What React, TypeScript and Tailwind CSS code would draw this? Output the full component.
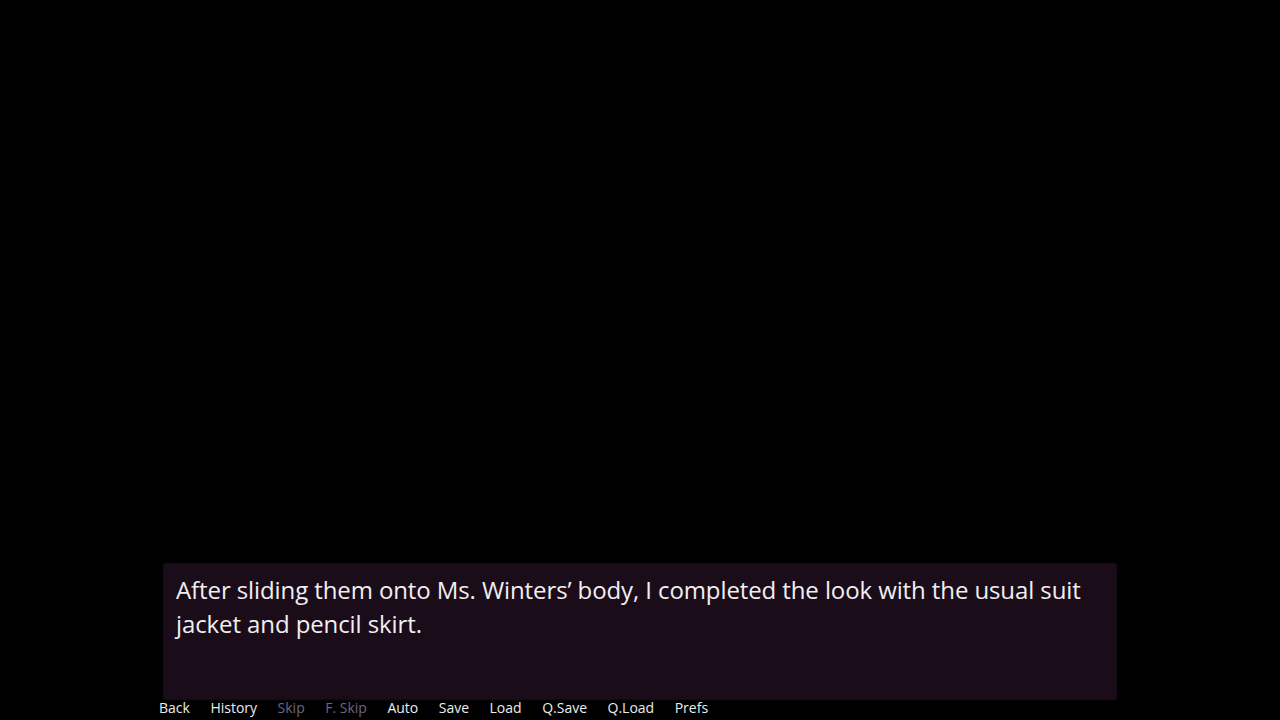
const menu = [
  { label: 'Back', on: true },
  { label: 'History', on: true },
  { label: 'Skip', on: false },
  { label: 'F. Skip', on: false },
  { label: 'Auto', on: true },
  { label: 'Save', on: true },
  { label: 'Load', on: true },
  { label: 'Q.Save', on: true },
  { label: 'Q.Load', on: true },
  { label: 'Prefs', on: true },
];

export default function App() {
  return (
    <div className="w-[1280px] h-[720px] bg-black overflow-hidden flex flex-col" style={{ fontFamily: '"Open Sans", "Noto Sans", sans-serif' }}>
      <div className="flex-1" />

      {/* say window */}
      <div className="ml-[164px] w-[952px] h-[135px] bg-[#1a0d19] rounded-[2px] shadow-[0_0_2px_1px_#1a0d19] px-[12px] pt-[9px]">
        <p className="text-[24px] leading-[34px] text-[#f2eef2] tracking-[-0.1px]">
          After sliding them onto Ms. Winters’ body, I completed the look with the usual suit jacket and pencil skirt.
        </p>
      </div>

      {/* quick menu */}
      <div className="relative -mt-[2px] flex gap-[20.5px] pl-[159px] h-[21px] mb-[2px] items-center">
        {menu.map((m) => (
          <button
            key={m.label}
            className={`text-[14px] leading-[20px] ${m.on ? 'text-[#ececec]' : 'text-[#6c6680]'}`}
          >
            {m.label}
          </button>
        ))}
      </div>
    </div>
  );
}
